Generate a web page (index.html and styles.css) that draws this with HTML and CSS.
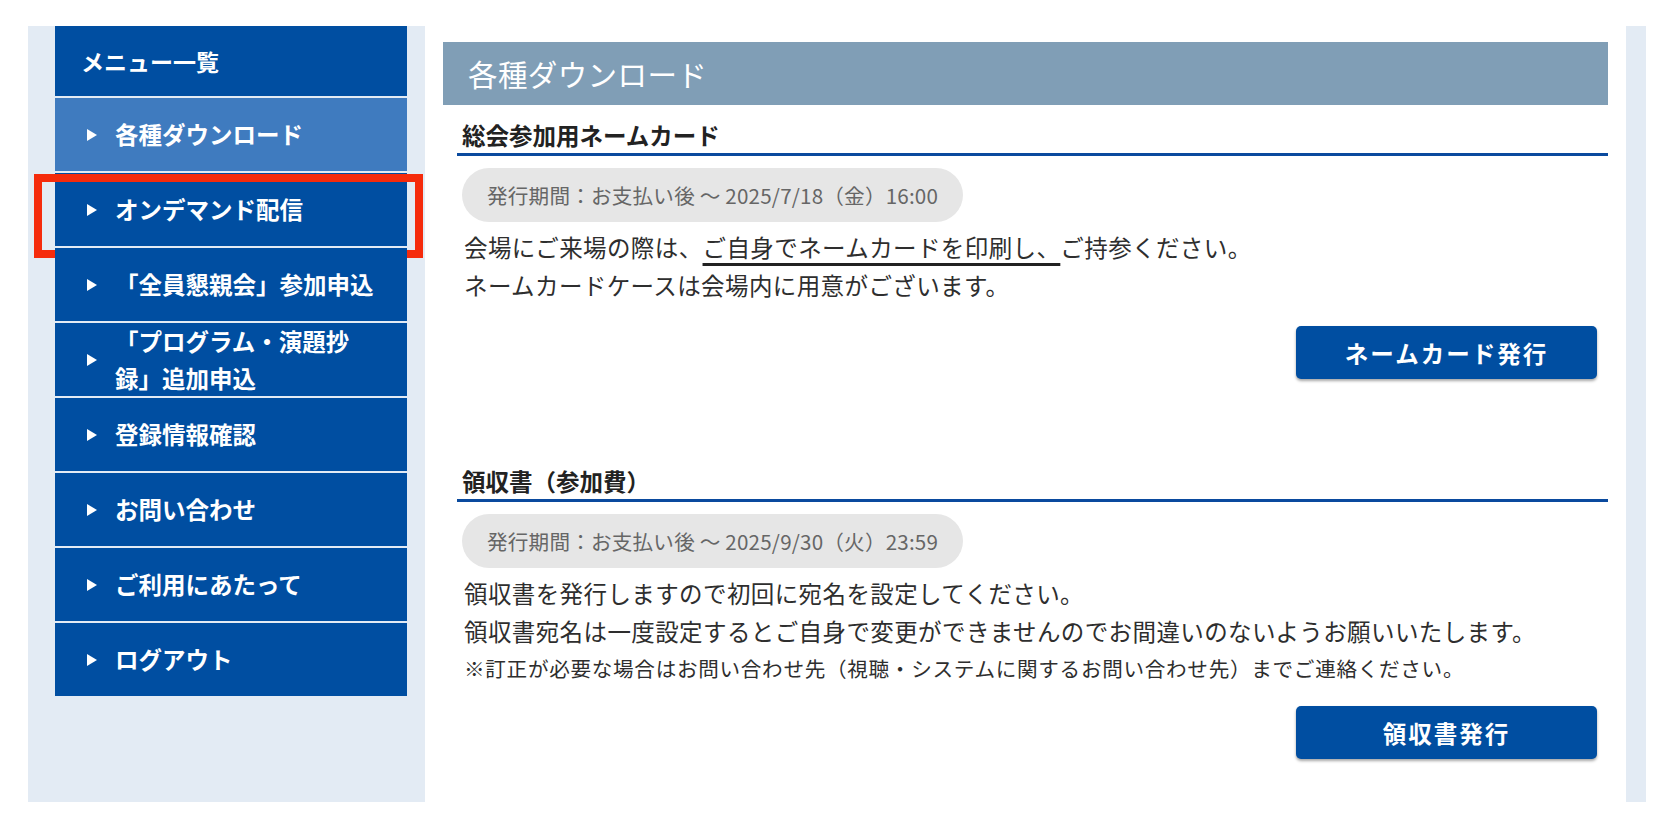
FILE: index.html
```html
<!DOCTYPE html>
<html lang="ja">
<head>
<meta charset="utf-8">
<title>各種ダウンロード</title>
<link rel="stylesheet" href="styles.css">
</head>
<body>
<div class="page">
  <aside class="sidebar">
    <nav class="menu">
      <div class="menu-head">メニュー一覧</div>
      <a class="menu-item is-active" href="#"><span class="arrow"></span><span class="label">各種ダウンロード</span></a>
      <a class="menu-item is-marked" href="#"><span class="arrow"></span><span class="label">オンデマンド配信</span><span class="mark"></span></a>
      <a class="menu-item" href="#"><span class="arrow"></span><span class="label">「全員懇親会」参加申込</span></a>
      <a class="menu-item" href="#"><span class="arrow"></span><span class="label">「プログラム・演題抄録」追加申込</span></a>
      <a class="menu-item" href="#"><span class="arrow"></span><span class="label">登録情報確認</span></a>
      <a class="menu-item" href="#"><span class="arrow"></span><span class="label">お問い合わせ</span></a>
      <a class="menu-item" href="#"><span class="arrow"></span><span class="label">ご利用にあたって</span></a>
      <a class="menu-item" href="#"><span class="arrow"></span><span class="label">ログアウト</span></a>
    </nav>
  </aside>
  <main class="main">
    <h1 class="page-title">各種ダウンロード</h1>
    <section class="section">
      <h2 class="section-title">総会参加用ネームカード</h2>
      <div class="period">発行期間：お支払い後 ～ 2025/7/18（金）16:00</div>
      <div class="text">
        <p>会場にご来場の際は、<span class="uline">ご自身でネームカードを印刷し、</span>ご持参ください。</p>
        <p>ネームカードケースは会場内に用意がございます。</p>
      </div>
      <button class="btn" type="button">ネームカード発行</button>
    </section>
    <section class="section section-second">
      <h2 class="section-title">領収書（参加費）</h2>
      <div class="period">発行期間：お支払い後 ～ 2025/9/30（火）23:59</div>
      <div class="text">
        <p>領収書を発行しますので初回に宛名を設定してください。</p>
        <p>領収書宛名は一度設定するとご自身で変更ができませんのでお間違いのないようお願いいたします。</p>
        <p class="note">※訂正が必要な場合はお問い合わせ先（視聴・システムに関するお問い合わせ先）までご連絡ください。</p>
      </div>
      <button class="btn" type="button">領収書発行</button>
    </section>
  </main>
</div>
</body>
</html>
```

FILE: styles.css
```css
* {
  box-sizing: border-box;
}

html, body {
  margin: 0;
  padding: 0;
  background: #ffffff;
}

body {
  font-family: "Noto Sans CJK JP", "Noto Sans", sans-serif;
  color: #333333;
  padding: 26px 0 0 28px;
}

.page {
  width: 1618px;
  height: 776px;
  display: flex;
  background: #e3ebf4;
  padding-right: 20px;
}

/* ---------- sidebar ---------- */
.sidebar {
  width: 397px;
  flex: none;
  padding: 0 18px 0 27px;
}

.menu {
  display: flex;
  flex-direction: column;
}

.menu-head {
  height: 70px;
  background: #004ea1;
  color: #ffffff;
  font-weight: 700;
  font-size: 23px;
  line-height: 70px;
  padding-left: 26px;
}

.menu-item {
  position: relative;
  display: flex;
  align-items: center;
  height: 73px;
  margin-top: 2px;
  padding: 0 25px 0 32px;
  background: #004ea1;
  color: #ffffff;
  text-decoration: none;
  font-weight: 700;
  font-size: 23.5px;
  line-height: 37px;
}

.menu-item.is-active {
  background: #3f7bbf;
}

.arrow {
  flex: none;
  width: 0;
  height: 0;
  border-left: 10px solid #ffffff;
  border-top: 6.5px solid transparent;
  border-bottom: 6.5px solid transparent;
  margin-right: 18px;
}

.label {
  flex: 1;
}

.mark {
  position: absolute;
  left: -21px;
  top: 1px;
  width: 389px;
  height: 84px;
  border: 8px solid #f52b0c;
  pointer-events: none;
}

/* ---------- main ---------- */
.main {
  flex: 1;
  background: #ffffff;
  padding: 16px 18px 0 18px;
}

.page-title {
  margin: 0;
  height: 63px;
  background: #809eb6;
  color: #ffffff;
  font-weight: 400;
  font-size: 29.5px;
  letter-spacing: 0.4px;
  line-height: 63px;
  padding-left: 25px;
}

.section {
  margin-left: 14px;
  display: flex;
  flex-direction: column;
}

.section-second {
  margin-top: 72px;
}

.section-title {
  margin: 12px 0 0 0;
  font-size: 23.5px;
  font-weight: 700;
  line-height: 36px;
  color: #222222;
  padding-left: 5px;
  border-bottom: 3px solid #0a4a9e;
}

.period {
  align-self: flex-start;
  margin: 12px 0 0 5px;
  height: 54px;
  line-height: 54px;
  padding: 0 25px;
  border-radius: 27px;
  background: #e6e6e6;
  color: #666666;
  font-size: 20.6px;
  letter-spacing: 0.2px;
  white-space: nowrap;
}

.text {
  margin-top: 7px;
  padding-left: 7px;
  font-size: 23.5px;
  letter-spacing: 0.4px;
  line-height: 37.5px;
  color: #2e2e2e;
}

.text p {
  margin: 0;
}

.text .note {
  font-size: 20.6px;
  letter-spacing: 0.7px;
  line-height: 36px;
}

.uline {
  text-decoration: underline;
  text-decoration-color: #222222;
  text-decoration-thickness: 3px;
  text-underline-offset: 6px;
}

.btn {
  align-self: flex-end;
  margin: 22px 11px 0 0;
  width: 301px;
  height: 53px;
  border: none;
  border-radius: 5px;
  background: #004ea1;
  color: #ffffff;
  font-family: "Noto Sans CJK JP", "Noto Sans", sans-serif;
  font-weight: 700;
  font-size: 23.5px;
  letter-spacing: 2px;
  box-shadow: 0 2px 3px rgba(0, 0, 0, 0.35);
  cursor: pointer;
}

.section-second .btn {
  margin-top: 20px;
}
```
